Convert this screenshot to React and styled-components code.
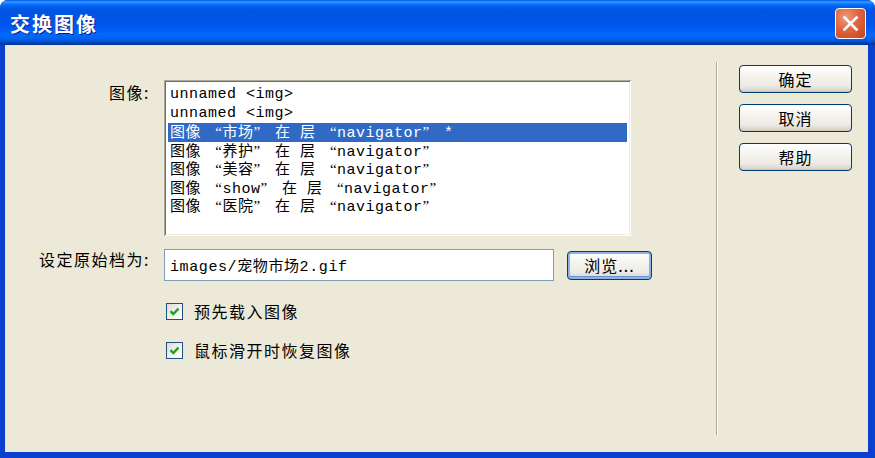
import React from 'react'
import styled, { createGlobalStyle } from 'styled-components';

const GlobalStyle = createGlobalStyle`
  html, body {
    margin: 0;
    padding: 0;
    background: #ffffff;
  }
  body {
    font-family: "Noto Sans CJK SC", "Noto Sans", sans-serif;
  }
`;

const Window = styled.div`
  width: 875px;
  height: 458px;
  display: flex;
  flex-direction: column;
  background: #0a3fd2;
  border-radius: 8px 8px 0 0;
  overflow: hidden;
`;

const TitleBar = styled.div`
  height: 45px;
  flex: none;
  display: flex;
  align-items: center;
  justify-content: space-between;
  padding: 0 9px 0 10px;
  box-sizing: border-box;
  background: linear-gradient(to bottom,
    #0058ee 0%, #3593ff 4%, #288eff 6%, #127dff 8%, #036ffc 10%,
    #0262ee 14%, #0057e5 20%, #0054e3 24%, #0055eb 56%, #005bf5 66%,
    #026afe 76%, #0062ef 86%, #0052d6 92%, #0040ab 96%, #003092 100%);
`;

const Title = styled.span`
  color: #ffffff;
  font-size: 20px;
  font-weight: 700;
  letter-spacing: 2px;
  text-shadow: 1px 1px 0 #0a1883;
  line-height: 1;
  margin-top: 2px;
`;

const CloseButton = styled.div`
  width: 31px;
  height: 31px;
  box-sizing: border-box;
  border: 1px solid #ffffff;
  border-radius: 4px;
  background: radial-gradient(circle at 35% 30%, #f09a7d 0%, #e0653e 45%, #c6401a 100%);
  display: flex;
  align-items: center;
  justify-content: center;
  margin-top: 2px;
`;

const Body = styled.div`
  flex: 1;
  display: flex;
  margin: 0 7px 6px 5px;
  background: #ece9d8;
  box-shadow: inset 1px 0 0 #d8e4f8;
`;

const Main = styled.div`
  width: 711px;
  padding-top: 35px;
  box-sizing: border-box;
  display: grid;
  grid-template-columns: 145px 1fr;
  column-gap: 14px;
  align-content: start;
`;

const Label = styled.div`
  text-align: right;
  font-size: 16px;
  letter-spacing: 1.5px;
  color: #000000;
  padding-top: ${(p) => p.top || 0}px;
  align-self: ${(p) => (p.center ? 'center' : 'start')};
`;

const ListBox = styled.div`
  width: 467px;
  height: 156px;
  box-sizing: border-box;
  background: #ffffff;
  padding: 6px 4px 4px;
  box-shadow:
    inset 1px 1px 0 #aca899,
    inset -1px -1px 0 #ffffff,
    inset 2px 2px 0 #716f64,
    inset -2px -2px 0 #f1efe2;
  font-family: "Liberation Mono", "Noto Sans CJK SC", monospace;
  font-size: 15px;
  letter-spacing: 0.5px;
  white-space: pre;
`;

const ListItem = styled.div`
  height: 18.5px;
  line-height: 18.5px;
  padding-left: 2px;
  color: ${(p) => (p.selected ? '#ffffff' : '#000000')};
  background: ${(p) => (p.selected ? '#316ac5' : 'transparent')};
`;

const Quote = styled.span`
  display: inline-block;
  width: 12px;
  text-align: ${(p) => (p.open ? 'right' : 'left')};
  font-family: "Liberation Serif", serif;
`;

const FieldRow = styled.div`
  display: flex;
  align-items: center;
  gap: 13px;
  margin-top: 13px;
`;

const TextInput = styled.div`
  width: 390px;
  height: 32px;
  box-sizing: border-box;
  border: 1px solid #7f9db9;
  background: #ffffff;
  padding-left: 5px;
  display: flex;
  align-items: center;
  font-family: "Liberation Mono", "Noto Sans CJK SC", monospace;
  font-size: 15px;
  letter-spacing: 0.6px;
`;

const Button = styled.div`
  width: ${(p) => p.w}px;
  height: ${(p) => p.h}px;
  box-sizing: border-box;
  border: 1px solid #003c74;
  border-radius: 4px;
  background: linear-gradient(to bottom, #ffffff 0%, #f4f3ee 40%, #ecebe6 75%, #d6d0c5 100%);
  box-shadow: ${(p) => (p.focus ? 'inset 0 0 0 2px #8db2e3, inset 0 -1px 0 2px #6894d7' : 'inset 0 -1px 0 #cdc7ba')};
  display: flex;
  align-items: center;
  justify-content: center;
  font-size: 16px;
  letter-spacing: 1px;
  color: #000000;
`;

const CheckRow = styled.div`
  grid-column: 2;
  display: flex;
  align-items: center;
  gap: 11px;
  padding-left: 2px;
  margin-top: ${(p) => p.top}px;
  font-size: 16px;
  letter-spacing: 1.5px;
`;

const CheckBox = styled.div`
  width: 17px;
  height: 17px;
  box-sizing: border-box;
  border: 1px solid #1c5180;
  background: linear-gradient(135deg, #dcdcd7 0%, #f5f5f2 60%, #ffffff 100%);
  display: flex;
  align-items: center;
  justify-content: center;
`;

const Separator = styled.div`
  width: 1px;
  margin: 17px 0 17px 0;
  background: #aca899;
  border-right: 1px solid #ffffff;
`;

const Side = styled.div`
  display: flex;
  flex-direction: column;
  gap: 11px;
  padding: 20px 0 0 21px;
`;

const Check = () => (
  <svg width="11" height="11" viewBox="0 0 11 11">
    <path d="M1.5 5.2 L4.3 8 L9.5 2.6" fill="none" stroke="#21a121" strokeWidth="2.4" />
  </svg>
);

// curly quotes are wider in the original list font
const withQuotes = (text) =>
  text.split(/([“”])/).map((part, i) =>
    part === '“' || part === '”'
      ? <Quote key={i} open={part === '“'}>{part}</Quote>
      : part
  );

const rows = [
  'unnamed <img>',
  'unnamed <img>',
  '图像 “市场” 在 层 “navigator” *',
  '图像 “养护” 在 层 “navigator”',
  '图像 “美容” 在 层 “navigator”',
  '图像 “show” 在 层 “navigator”',
  '图像 “医院” 在 层 “navigator”',
];

const App = () => {
  return (
    <>
      <GlobalStyle />
      <Window>
        <TitleBar>
          <Title>交换图像</Title>
          <CloseButton>
            <svg width="17" height="17" viewBox="0 0 17 17">
              <path d="M2.5 2.5 L14.5 14.5 M14.5 2.5 L2.5 14.5" stroke="#ffffff" strokeWidth="2.6" strokeLinecap="square" />
            </svg>
          </CloseButton>
        </TitleBar>
        <Body>
          <Main>
            <Label top={0}>图像:</Label>
            <ListBox>
              {rows.map((r, i) => (
                <ListItem key={i} selected={i === 2}>{withQuotes(r)}</ListItem>
              ))}
            </ListBox>
            <Label center>设定原始档为:</Label>
            <FieldRow>
              <TextInput>images/宠物市场2.gif</TextInput>
              <Button w={85} h={29} focus>浏览...</Button>
            </FieldRow>
            <CheckRow top={18}>
              <CheckBox><Check /></CheckBox>
              预先载入图像
            </CheckRow>
            <CheckRow top={15}>
              <CheckBox><Check /></CheckBox>
              鼠标滑开时恢复图像
            </CheckRow>
          </Main>
          <Separator />
          <Side>
            <Button w={113} h={28}>确定</Button>
            <Button w={113} h={28}>取消</Button>
            <Button w={113} h={28}>帮助</Button>
          </Side>
        </Body>
      </Window>
    </>
  );
};

export default App;
